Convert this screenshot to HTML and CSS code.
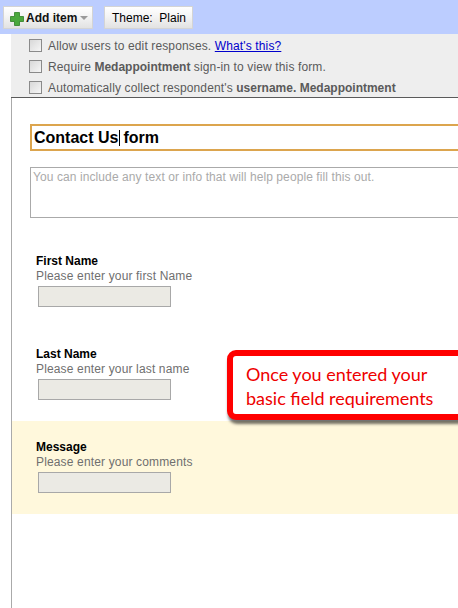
FILE: index.html
```html
<!DOCTYPE html>
<html>
<head>
<meta charset="utf-8">
<link rel="stylesheet" href="styles.css">
</head>
<body>
<div class="toolbar">
  <div class="btn add-btn">
    <svg class="plus" width="14" height="14" viewBox="0 0 14 14"><path d="M4.5 0.5h5v4h4v5h-4v4h-5v-4h-4v-5h4z" fill="#4aa83c" stroke="#2f7f25" stroke-width="0.8"/></svg>
    <span class="add-label">Add item</span>
    <span class="caret"></span>
  </div>
  <div class="btn theme-btn">Theme:&nbsp; Plain</div>
</div>
<div class="settings">
  <div class="opt"><span class="cb"></span><span>Allow users to edit responses. <a class="link" href="#">What's this?</a></span></div>
  <div class="opt"><span class="cb"></span><span>Require <b>Medappointment</b> sign-in to view this form.</span></div>
  <div class="opt"><span class="cb"></span><span>Automatically collect respondent's <b>username. Medappointment</b></span></div>
</div>
<div class="main">
  <div class="title-box">Contact Us<span class="cursor"></span>form</div>
  <div class="desc-box">You can include any text or info that will help people fill this out.</div>
  <div class="fields">
    <div class="field">
      <div class="f-label">First Name</div>
      <div class="f-help">Please enter your first Name</div>
      <div class="f-input"></div>
    </div>
    <div class="field">
      <div class="f-label">Last Name</div>
      <div class="f-help">Please enter your last name</div>
      <div class="f-input"></div>
    </div>
    <div class="field active">
      <div class="f-label">Message</div>
      <div class="f-help">Please enter your comments</div>
      <div class="f-input"></div>
    </div>
  </div>
  <div class="callout">Once you entered your<br>basic field requirements</div>
</div>
</body>
</html>
```
FILE: styles.css
```css
html, body {
  margin: 0;
  padding: 0;
  overflow: hidden;
  background: #fff;
}
body {
  width: 458px;
  height: 608px;
  font-family: "Liberation Sans", Arial, sans-serif;
  font-size: 12px;
}
.toolbar {
  height: 34px;
  box-sizing: border-box;
  background: #bccdff;
  padding: 6px 0 0 3px;
  display: flex;
  gap: 11px;
}
.btn {
  height: 23px;
  box-sizing: border-box;
  border: 1px solid #d4d4d4;
  background: linear-gradient(#ffffff, #f4f4f4 45%, #e2e2e2);
  display: flex;
  align-items: center;
  color: #000;
  font-size: 12px;
}
.add-btn {
  width: 90px;
  padding-left: 6px;
}
.plus {
  display: block;
  margin-top: 2px;
}
.add-label {
  font-weight: bold;
  margin-left: 2px;
  color: #111;
}
.caret {
  margin-left: 3px;
  margin-top: 1px;
  width: 0;
  height: 0;
  border-left: 4px solid transparent;
  border-right: 4px solid transparent;
  border-top: 4px solid #9a9a9a;
}
.theme-btn {
  width: 89px;
  padding-left: 7px;
}
.settings {
  margin-left: 11px;
  background: #eeeeee;
  height: 64px;
  box-sizing: border-box;
  padding-top: 1px;
  border-bottom: 1px solid #5a5a5a;
  color: #5a5a5a;
  letter-spacing: 0.13px;
}
.opt {
  height: 21px;
  display: flex;
  align-items: center;
  padding-left: 18px;
}
.cb {
  width: 11px;
  height: 11px;
  border: 1px solid #8a8a8a;
  background: linear-gradient(135deg, #d8d8d8, #f6f6f6);
  margin-right: 6px;
  flex: none;
}
.opt b {
  font-weight: bold;
  letter-spacing: 0;
}
.link {
  color: #0000cc;
  text-decoration: underline;
}
.main {
  position: relative;
  margin-left: 11px;
  border-left: 1px solid #aaaaaa;
  height: 520px;
  padding-top: 26px;
  box-sizing: border-box;
  width: 600px;
}
.title-box {
  margin-left: 18px;
  height: 27px;
  box-sizing: border-box;
  border: 2px solid #dca54e;
  padding-left: 2px;
  line-height: 23px;
  font-size: 16px;
  font-weight: bold;
  color: #000;
  display: flex;
  align-items: center;
}
.cursor {
  display: inline-block;
  width: 1px;
  height: 16px;
  background: #000;
  margin: 0 3px 0 1px;
}
.desc-box {
  margin-left: 18px;
  margin-top: 16px;
  height: 51px;
  box-sizing: border-box;
  border: 1px solid #aaaaaa;
  padding: 2px 2px;
  line-height: 15px;
  color: #aaaaaa;
  letter-spacing: 0.09px;
}
.fields {
  margin-top: 17px;
}
.field {
  padding: 19px 0 21px 24px;
}
.field.active {
  background: #fff8dc;
}
.f-label {
  font-weight: bold;
  color: #000;
  line-height: 15px;
}
.f-help {
  color: #6f6f6f;
  line-height: 15px;
  letter-spacing: 0.15px;
}
.f-input {
  margin: 2px 0 0 2px;
  width: 133px;
  height: 21px;
  box-sizing: border-box;
  background: #ebeae4;
  border: 1px solid #a8a8a8;
}
.callout {
  position: absolute;
  left: 215px;
  top: 252px;
  width: 300px;
  height: 70px;
  box-sizing: border-box;
  border: 6px solid #ff0000;
  border-radius: 9px;
  background: #fff;
  box-shadow: 1px 4px 3px rgba(0, 0, 0, 0.55);
  padding: 6px 0 0 13px;
  font-family: Lato, "Open Sans", sans-serif;
  font-size: 18px;
  line-height: 24px;
  color: #ee0000;
}
```
